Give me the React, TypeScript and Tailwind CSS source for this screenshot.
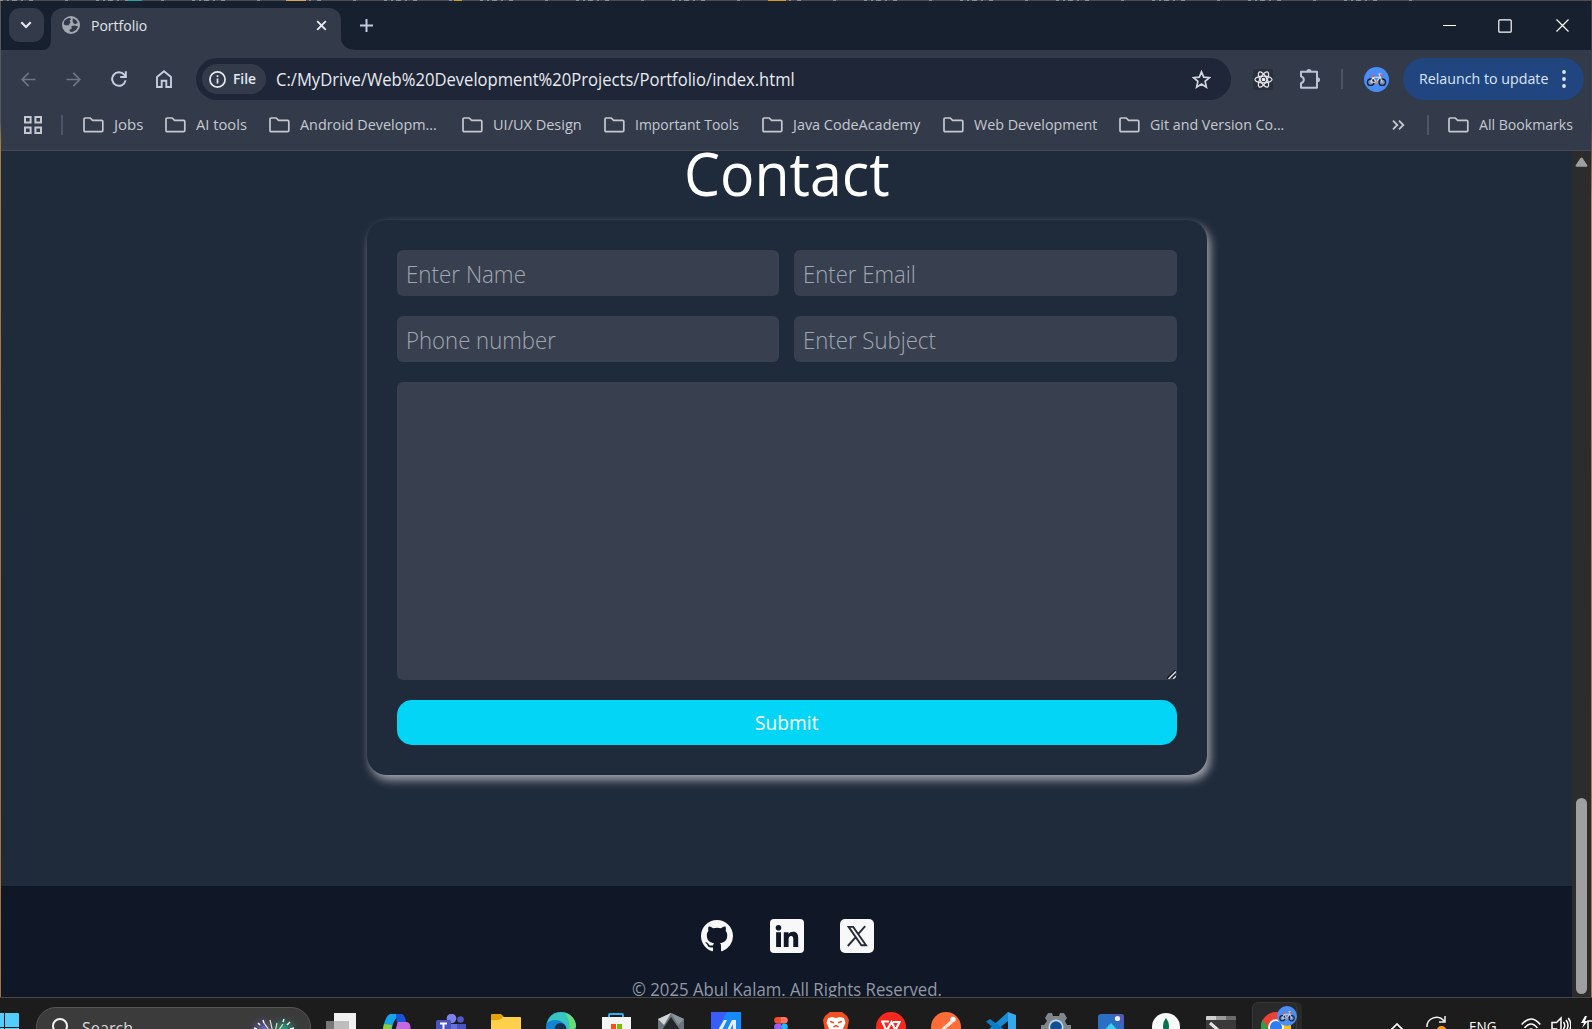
import { useLayoutEffect, useRef, useState } from 'react'
import type { ReactNode } from 'react'

/** A single line of text condensed horizontally to fill a given width. */
function Fit({ w, className = '', children }: { w: number; className?: string; children: string }) {
  const ref = useRef<HTMLSpanElement>(null)
  const [scale, setScale] = useState(1)
  useLayoutEffect(() => {
    if (ref.current) setScale(w / ref.current.offsetWidth)
  }, [w])
  return (
    <span className={`block shrink-0 ${className}`} style={{ width: w }}>
      <span ref={ref} className="inline-block origin-left whitespace-nowrap" style={{ transform: `scaleX(${scale})` }}>
        {children}
      </span>
    </span>
  )
}

function Folder() {
  return (
    <svg className="block h-[16px] w-[21px] shrink-0" viewBox="0 0 21 16" fill="none" stroke="#c6c8cf" strokeWidth="1.7">
      <path d="M1 2.2Q1 1 2.2 1H7.2L9.6 3.4H18.6Q19.8 3.4 19.8 4.6V13.4Q19.8 14.6 18.6 14.6H2.2Q1 14.6 1 13.4Z" />
    </svg>
  )
}

const bookmarks = [
  { name: 'Jobs', w: 29, next: 22 },
  { name: 'AI tools', w: 51, next: 22 },
  { name: 'Android Developm...', w: 137, next: 25 },
  { name: 'UI/UX Design', w: 89, next: 22 },
  { name: 'Important Tools', w: 104, next: 23 },
  { name: 'Java CodeAcademy', w: 127, next: 23 },
  { name: 'Web Development', w: 123, next: 22 },
  { name: 'Git and Version Co...', w: 134, next: 0 },
]

function Bike({ className }: { className: string }) {
  return (
    <svg className={className} viewBox="0 0 25 25">
      <circle cx="12.5" cy="12.5" r="12.5" fill="#4a8df6" />
      <g fill="#6f96c9" stroke="#152238" strokeWidth="1.4">
        <circle cx="6.7" cy="15.2" r="3.2" />
        <circle cx="18.3" cy="15.2" r="3.2" />
      </g>
      <path d="M6.7 15 9 10.3h6.8L12.3 15.3H6.7M9 10.3l3.3 5M15.2 7.2l3 8M14.5 7h3" fill="none" stroke="#e7dfd2" strokeWidth="1.1" />
      <path d="M7 8.7h3.6M16 7.5l2.3 1.8" stroke="#e8543c" strokeWidth="1.4" />
      <circle cx="12.4" cy="15.4" r="1.3" fill="#f08a4d" />
    </svg>
  )
}

function TabStrip() {
  return (
    <div className="flex h-[49px] bg-[#17202f] pt-[7px]">
      <div className="ml-[8px] flex h-[34px] w-[35px] items-center justify-center rounded-[11px] bg-[#333b4b] pr-[1px]">
        <svg className="h-[8px] w-[12px]" viewBox="0 0 12 8" fill="none" stroke="#e6e8ee" strokeWidth="2.1">
          <path d="M1.3 1.3 6 6l4.700-4.700" />
        </svg>
      </div>
      <svg className="mt-[30px] h-[12px] w-[7px]" viewBox="0 0 7 12">
        <path d="M0 12Q7 11 7 0V12Z" fill="#333b4b" />
      </svg>
      <div className="flex h-[42px] w-[290px] items-center rounded-t-[12px] bg-[#333b4b] pb-[8px] pl-[11px] pr-[14px]">
        <svg className="h-[18px] w-[18px]" viewBox="0 0 18 18">
          <circle cx="9" cy="9" r="9" fill="#a3a8b0" />
          <path d="M2 5.500Q4.500 1.800 8 2L9 3.500 7.500 4.600 8.600 6.200 7.500 7.700 6.800 9.300H3.200L1.700 8.200ZM10.800 2.200Q14.600 3.300 15.800 6.600L13.600 8.300 11.600 7.600 10.600 5.400ZM9.400 10.200 12 9.600 16 10.300Q15 14.500 10.200 16L8.200 15.800 7.300 14 9.700 12.600Z" fill="#333b4b" />
        </svg>
        <Fit w={56} className="ml-[11px] text-[15px] text-[#e2e4ea]">Portfolio</Fit>
        <svg className="ml-auto h-[11px] w-[11px]" viewBox="0 0 12 12" stroke="#eceef2" strokeWidth="2">
          <path d="M1.300 1.300l9.400 9.400M10.700 1.300 1.300 10.700" />
        </svg>
      </div>
      <svg className="mt-[30px] h-[12px] w-[14px]" viewBox="0 0 14 12">
        <path d="M0 0Q1 11 14 12H0Z" fill="#333b4b" />
      </svg>
      <svg className="ml-[5px] mt-[11px] h-[13px] w-[13px]" viewBox="0 0 13 13" stroke="#c3cade" strokeWidth="2">
        <path d="M6.500 0v13M0 6.500h13" />
      </svg>
      <div className="ml-auto mr-[22px] mt-[10px] flex h-[15px] items-center">
        <svg className="h-[13px] w-[13px]" viewBox="0 0 13 13" stroke="#fff"><path d="M0 6.500h13" /></svg>
        <svg className="ml-[42px] h-[14px] w-[14px]" viewBox="0 0 14 14" stroke="#fff" strokeWidth="1.2" fill="none"><rect x=".8" y=".8" width="12.400" height="12.400" rx="1" /></svg>
        <svg className="ml-[44px] h-[13px] w-[13px]" viewBox="0 0 13 13" stroke="#fff" strokeWidth="1.2"><path d="M.5.5l12 12M12.500.5l-12 12" /></svg>
      </div>
    </div>
  )
}

function Toolbar() {
  return (
    <div className="flex h-[58px] items-center">
      <svg className="ml-[20px] h-[15px] w-[15px]" viewBox="0 0 16 16" fill="none" stroke="#6e7685" strokeWidth="1.8">
        <path d="M15.500 8H1.500M8.200 1 1.300 8l6.900 7" />
      </svg>
      <svg className="ml-[30px] h-[15px] w-[15px]" viewBox="0 0 16 16" fill="none" stroke="#6e7685" strokeWidth="1.8">
        <path d="M.5 8h14M7.800 1l6.900 7-6.900 7" />
      </svg>
      <svg className="ml-[30px] h-[16px] w-[16px]" viewBox="0 0 16 16" fill="none" stroke="#c6cde0" strokeWidth="2">
        <path d="M14.600 9.400A6.800 6.800 0 1 1 13.200 3.600L14.800 5.600" />
        <path d="M14.800.3V6H9.200" />
      </svg>
      <svg className="ml-[29px] h-[18px] w-[16px]" viewBox="0 0 16 18" fill="none" stroke="#c6cde0" strokeWidth="1.9">
        <path d="M1 7 8 1.300 15 7V17H10.300V10.800H5.700V17H1Z" />
      </svg>
      <div className="ml-[24px] flex h-[42px] w-[1035px] items-center rounded-full bg-[#1e2637] pl-[6px]">
        <div className="flex h-[30px] w-[64px] items-center rounded-full bg-[#333b4b] pl-[7px]">
          <svg className="h-[17px] w-[17px]" viewBox="0 0 17 17" fill="none" stroke="#e6e8ee" strokeWidth="1.7">
            <circle cx="8.500" cy="8.500" r="7.600" />
            <path d="M8.500 7.600v5M8.500 4.300v1.800" />
          </svg>
          <Fit w={23} className="mb-[1px] ml-[7px] text-[15px] font-semibold text-[#e6e8ee]">File</Fit>
        </div>
        <Fit w={519} className="ml-[10px] text-[17.5px] text-[#e8eaf0]">C:/MyDrive/Web%20Development%20Projects/Portfolio/index.html</Fit>
        <svg className="ml-auto mr-[20px] h-[19px] w-[19px]" viewBox="0 0 19 19" fill="none" stroke="#d3d6df" strokeWidth="1.7">
          <path d="M9.500 1.800l2.200 5.300 5.800.5-4.400 3.800 1.300 5.700-4.900-3-4.900 3 1.300-5.700L1.500 7.600l5.800-.5Z" />
        </svg>
      </div>
      <div className="ml-[22px] flex h-[21px] w-[20px] items-center justify-center rounded-[2px] bg-[#2a2f3a]">
        <svg className="h-[19px] w-[19px]" viewBox="0 0 20 20" fill="none" stroke="#e3e5e9" strokeWidth="1.3">
          <ellipse cx="10" cy="10" rx="9" ry="3.500" />
          <ellipse cx="10" cy="10" rx="9" ry="3.500" transform="rotate(60 10 10)" />
          <ellipse cx="10" cy="10" rx="9" ry="3.500" transform="rotate(120 10 10)" />
          <circle cx="10" cy="10" r="1.300" fill="#fff" />
        </svg>
      </div>
      <svg className="mb-[1px] ml-[26px] h-[22px] w-[22px]" viewBox="0 0 22 22">
        <path d="M2 3.800H18V19.800H2V15.200Q4.800 14.400 4.800 11.800T2 8.400Z" fill="none" stroke="#bcc3d6" strokeWidth="2" strokeLinejoin="round" />
        <path d="M7.500 3.500A2.500 2.500 0 0 1 12.500 3.500ZM18.500 9.300A2.500 2.500 0 0 1 18.500 14.300Z" fill="#bcc3d6" />
      </svg>
      <div className="ml-[20px] h-[20px] w-[2px] bg-[#4d5668]" />
      <Bike className="ml-[21px] h-[25px] w-[25px]" />
      <div className="ml-[14px] flex h-[42px] w-[181px] items-center rounded-full bg-[#20457f] pl-[16px]">
        <Fit w={129} className="mb-[1px] text-[15px] text-[#dbe6fb]">Relaunch to update</Fit>
        <svg className="ml-[14px] h-[18px] w-[4px]" viewBox="0 0 4 18" fill="#dbe6fb">
          <circle cx="2" cy="2" r="1.900" /><circle cx="2" cy="9" r="1.900" /><circle cx="2" cy="16" r="1.900" />
        </svg>
      </div>
    </div>
  )
}

function BookmarksBar() {
  return (
    <div className="flex h-[42px] items-center pb-[8px] text-[15px] text-[#c6c8cf]">
      <svg className="ml-[23px] h-[18px] w-[18px]" viewBox="0 0 18 18" fill="none" stroke="#c6c8cf" strokeWidth="2">
        <path d="M1 1h5.600v5.600H1ZM11.400 1H17v5.600h-5.600ZM1 11.400h5.600V17H1ZM11.400 11.400H17V17h-5.600Z" />
      </svg>
      <div className="ml-[19px] mr-[20px] h-[20px] w-[2px] bg-[#4d5668]" />
      {bookmarks.map((b) => (
        <div key={b.name} className="flex items-center" style={{ marginRight: b.next }}>
          <Folder />
          <Fit w={b.w} className="mb-[2px] ml-[10px]">{b.name}</Fit>
        </div>
      ))}
      <svg className="ml-auto h-[10px] w-[13px]" viewBox="0 0 13 10" fill="none" stroke="#c6c8cf" strokeWidth="1.8">
        <path d="M1 .7 5.300 5 1 9.300M7 .7 11.300 5 7 9.300" />
      </svg>
      <div className="ml-[22px] mr-[19px] h-[20px] w-[2px] bg-[#4d5668]" />
      <Folder />
      <Fit w={94} className="mb-[2px] ml-[10px] mr-[18px]">All Bookmarks</Fit>
    </div>
  )
}

function Field({ label, w }: { label: string; w: number }) {
  return (
    <div className="flex h-[46px] items-center rounded-[6px] bg-[#384050] pl-[9px] pt-[1px]">
      <Fit w={w} className="text-[23.5px] leading-[32px] font-light text-[#a1a7b1]">{label}</Fit>
    </div>
  )
}

function Page() {
  return (
    <div className="flex h-[846px] min-w-0 flex-1 flex-col overflow-hidden">
      <main className="flex h-[735px] shrink-0 flex-col items-center bg-[#1f2a3a] pl-px">
        <h1 className="mt-[-22px] flex h-[91px] items-center pb-[3px] text-[60px] leading-[82px] text-white">
          <Fit w={206}>Contact</Fit>
        </h1>
        <form className="flex w-[840px] flex-col gap-[20px] rounded-[20px] bg-[#1f2a3a] p-[30px] shadow-[3px_5px_10px_#a4a6b0]">
          <div className="grid grid-cols-[382px_383px] gap-x-[15px] gap-y-[20px]">
            <Field label="Enter Name" w={120} />
            <Field label="Enter Email" w={113} />
            <Field label="Phone number" w={150} />
            <Field label="Enter Subject" w={133} />
          </div>
          <div className="flex h-[298px] items-end justify-end rounded-[6px] bg-[#384050] p-[1px]">
            <svg className="h-[9px] w-[9px]" viewBox="0 0 9 9">
              <path d="M0 8.500 8.500 0M4.500 8.500 8.500 4.500" stroke="#14161c" strokeWidth="1.4" />
              <path d="M1.500 9 9 1.500M6 9 9 6" stroke="#dcdde0" strokeWidth="1.4" />
            </svg>
          </div>
          <div className="flex h-[45px] items-center justify-center rounded-[15px] bg-[#03d5f7]">
            <Fit w={64} className="text-[19.5px] text-white">Submit</Fit>
          </div>
        </form>
      </main>
      <footer className="flex h-[111px] shrink-0 flex-col items-center bg-[#101726] pl-px pt-[33px]">
        <div className="flex h-[34px] items-center">
          <svg className="h-[32px] w-[32px]" viewBox="0 0 16 16" fill="#f8f8fa">
            <path d="M8 0C3.58 0 0 3.58 0 8c0 3.54 2.29 6.53 5.47 7.59.4.07.55-.17.55-.38 0-.19-.01-.82-.01-1.49-2.01.37-2.53-.49-2.69-.94-.09-.23-.48-.94-.82-1.13-.28-.15-.68-.52-.01-.53.63-.01 1.08.58 1.23.82.72 1.21 1.87.87 2.33.66.07-.52.28-.87.51-1.07-1.78-.2-3.64-.89-3.64-3.95 0-.87.31-1.59.82-2.15-.08-.2-.36-1.02.08-2.12 0 0 .67-.21 2.2.82.64-.18 1.32-.27 2-.27s1.36.09 2 .27c1.53-1.04 2.2-.82 2.2-.82.44 1.1.16 1.92.08 2.12.51.56.82 1.27.82 2.15 0 3.07-1.87 3.75-3.65 3.95.29.25.54.73.54 1.48 0 1.07-.01 1.93-.01 2.2 0 .21.15.46.55.38A8.01 8.01 0 0 0 16 8c0-4.42-3.58-8-8-8Z" />
          </svg>
          <svg className="ml-[37px] h-[34px] w-[34px]" viewBox="0 0 34 34">
            <rect width="34" height="34" rx="4" fill="#f8f8fa" />
            <circle cx="8.500" cy="8.700" r="2.800" fill="#101726" />
            <path d="M6.1 13.2h4.9V28H6.1ZM13.8 13.2h4.7v2c1-1.6 2.5-2.4 4.5-2.4 4 0 5.2 2.6 5.2 6.5V28h-4.9v-7.6c0-2-.5-3.4-2.2-3.4-1.8 0-2.5 1.3-2.5 3.4V28h-4.8Z" fill="#101726" />
          </svg>
          <svg className="ml-[36px] h-[34px] w-[34px]" viewBox="0 0 34 34">
            <rect width="34" height="34" rx="5" fill="#f8f8fa" />
            <path d="M8.600 7.900h4.600L26 26.200h-4.600ZM25.200 7.200l-7.500 8.500M15.300 18.600 7.800 27" fill="none" stroke="#252b38" strokeWidth="1.9" />
          </svg>
        </div>
        <Fit w={310} className="mt-[23px] text-[17.5px] leading-[26px] text-[#9299a5]">© 2025 Abul Kalam. All Rights Reserved.</Fit>
      </footer>
    </div>
  )
}

function ScrollBar() {
  return (
    <div className="flex w-[19px] shrink-0 flex-col items-center bg-[#2c2c2c]">
      <svg className="mt-[6px] h-[10px] w-[13px]" viewBox="0 0 13 10">
        <path d="M5.400 1.200Q6.500-.2 7.600 1.200L12.200 8Q13 9.800 11.400 9.800H1.600Q0 9.800.8 8Z" fill="#9f9f9f" />
      </svg>
      <div className="mb-[3px] mt-auto h-[196px] w-[11px] rounded-full bg-[#9f9f9f]" />
    </div>
  )
}

function Slot({ top, w, children }: { top: number; w: number; children: ReactNode }) {
  return (
    <div className="flex w-[55px] shrink-0 justify-center" style={{ paddingTop: top }}>
      <svg className="h-[30px] shrink-0" style={{ width: w }} viewBox={`0 0 ${w} 30`}>{children}</svg>
    </div>
  )
}

function Taskbar() {
  return (
    <div className="flex h-[31px] items-start overflow-hidden bg-[#1c1c1c]">
      <svg className="mt-[15px] h-[30px] w-[19px] shrink-0" viewBox="0 0 19 30" fill="#55cdfb">
        <path d="M0 0H4V14H0ZM5 0H18Q19 0 19 1V14H5ZM0 15H4V28H0ZM5 15H19V28H5Z" />
      </svg>
      <div className="ml-[17px] mt-[9px] flex h-[40px] w-[275px] shrink-0 items-start rounded-full border border-[#565656] bg-[#3b3b3b] pl-[14px]">
        <svg className="mt-[10px] h-[20px] w-[20px]" viewBox="0 0 20 20" fill="none" stroke="#f2f2f2" strokeWidth="2">
          <circle cx="9" cy="8" r="7" /><path d="M4 13l-4 5" />
        </svg>
        <Fit w={51} className="ml-[11px] mt-[8px] text-[16.5px] leading-[24px] text-[#d6d6d6]">Search</Fit>
        <svg className="ml-auto mr-[8px] mt-[7px] h-[30px] w-[56px]" viewBox="0 0 56 30">
          <defs>
            <radialGradient id="sparkBlue"><stop offset="0" stopColor="#6d6bc8" /><stop offset="1" stopColor="#3b3b3b" stopOpacity="0" /></radialGradient>
            <radialGradient id="sparkTeal"><stop offset="0" stopColor="#23a58c" /><stop offset="1" stopColor="#3b3b3b" stopOpacity="0" /></radialGradient>
          </defs>
          <ellipse cx="18" cy="14" rx="18" ry="15" fill="url(#sparkBlue)" />
          <ellipse cx="38" cy="13" rx="17" ry="14" fill="url(#sparkTeal)" />
          <path d="M28 22 24 5M28 22 18 8M28 22 31 8M28 22 37 9" stroke="#e8e0b0" strokeWidth="1.2" />
          <path d="M8 13l3 1M12 8l2 2M17 5l1 3M38 4l-1 3M44 7l-3 3M48 13l-4 1M6 19h4" stroke="#fff" strokeWidth="1.4" />
        </svg>
      </div>
      <div className="ml-[2px] flex shrink-0">
        <Slot top={15} w={30}>
          <rect x="8" width="22" height="22" fill="#f1f1f1" /><rect y="8" width="23" height="20" fill="#777" /><rect x="8" y="8" width="15" height="16" fill="#bdbdbd" />
        </Slot>
        <Slot top={16} w={30}>
          <path d="M0 26Q3 2 9 0H21Q13 3 11 14L9 26Z" fill="#12a5e8" /><path d="M1 20 3 10 11 11 9 22Z" fill="#8fcb3a" /><path d="M15 0h6q3 1 4 8l-9 4Z" fill="#1c53d8" /><path d="M17 8h9q5 1 3 12H13Z" fill="#c668e4" />
        </Slot>
        <Slot top={16} w={30}>
          <circle cx="15.500" cy="4.500" r="4.800" fill="#7b83eb" /><circle cx="24.500" cy="5.500" r="3.300" fill="#5059c9" /><rect x="10" y="10" width="20" height="18" rx="2" fill="#6870dc" /><rect x="21" y="10" width="9" height="18" fill="#4a52bd" /><rect y="6" width="15" height="18" rx="1.500" fill="#4b53bc" /><path d="M4 9.500H11M7.500 9.500V20" stroke="#fff" strokeWidth="1.900" />
        </Slot>
        <Slot top={16} w={30}>
          <path d="M0 1Q0 0 1 0H10L13 3V8H0Z" fill="#e4a20a" /><path d="M0 6Q9 7 12 3H29Q30 3 30 4V28H0Z" fill="#ffd04c" />
        </Slot>
        <Slot top={14} w={30}>
          <circle cx="15" cy="15" r="15" fill="#1384d3" /><path d="M1 11Q4 0 15 0 28 1 30 14L27 20H19V13Q13 6 4 9Z" fill="#34c5c4" /><path d="M22 2Q30 6 30 15L26 19H22Q26 11 19 1Z" fill="#67dc74" /><circle cx="14.500" cy="17" r="6" fill="#13324f" />
        </Slot>
        <Slot top={14} w={30}>
          <path d="M8 6V2.700Q8 2 9 2H21Q22 2 22 2.700V6" fill="none" stroke="#26b4ec" strokeWidth="2" /><path d="M1 5H30V27H1Z" fill="#f4f4f4" /><path d="M10 12h5v5h-5Z" fill="#f25022" /><path d="M16 12h5v5h-5Z" fill="#7fba00" />
        </Slot>
        <Slot top={15} w={26}>
          <path d="M13 0 26 6V28H0V6Z" fill="#6d747b" /><path d="M13 0 26 6 20 12Z" fill="#8d959c" /><path d="M13 0 0 6 6 12Z" fill="#d2d6da" /><path d="M13 4 22 17H4Z" fill="#23272b" />
        </Slot>
        <Slot top={14} w={30}>
          <rect width="30" height="30" fill="#1689fb" /><path d="M0 0H16L0 30Z" fill="#3a5dfa" /><path d="M6 20 13 8h3L10 20ZM15 20 21 8h4v12h-3V12l-4 8Z" fill="#e9efff" />
        </Slot>
        <Slot top={19} w={14}>
          <path d="M7 0H3.500a3.300 3.300 0 0 0 0 6.600H7Z" fill="#f24e2e" /><path d="M7 0h3.500a3.300 3.300 0 0 1 0 6.600H7Z" fill="#ff7262" /><path d="M7 6.600H3.500a3.300 3.300 0 0 0 0 6.600H7Z" fill="#a259ff" /><circle cx="10.400" cy="9.900" r="3.300" fill="#1abcfe" />
        </Slot>
        <Slot top={14} w={26}>
          <path d="M7 0H19L24 4 26 8 23 25H3L0 8 2 4Z" fill="#f2501e" /><path d="M5 6 9 5l4 1 4-1 4 1 1.500 5-4 9H7.500l-4-9Z" fill="#fff" /><path d="M7 9.500l4 1.200M19 9.500l-4 1.200M10.500 15 13 13.500l2.500 1.500" fill="none" stroke="#f2501e" strokeWidth="1.500" />
        </Slot>
        <Slot top={14} w={30}>
          <circle cx="15" cy="15" r="15" fill="#f8281f" /><path d="M5 9.500H13M6.500 10l4 9 5-9 4 8 4-8H17" fill="none" stroke="#fff" strokeWidth="2.200" />
        </Slot>
        <Slot top={14} w={30}>
          <circle cx="15" cy="15" r="15" fill="#ff6c37" /><circle cx="22" cy="7.500" r="2.700" fill="#fff" /><path d="M19.500 8.500 22 11 13 18l-3 1 1-3Z" fill="#ffe6dc" />
        </Slot>
        <Slot top={14} w={30}>
          <path d="M22 0V9L6 22 2 20V18Z" fill="#168bd6" /><path d="M0 9.500 4 7 22 20V29Z" fill="#0d7cc8" /><path d="M22 0 30 3V28L22 30Z" fill="#35a8ee" />
        </Slot>
        <Slot top={15} w={30}>
          <path d="M7 0h4l1 3h6l1-3h4l3 5-2 3 2 4h4v8H0v-8h3l3-4-2-3Z" fill="#7f868d" /><circle cx="15" cy="14" r="7.500" fill="#c9d4de" /><circle cx="15" cy="14" r="5.800" fill="#0f4f96" />
        </Slot>
        <Slot top={16} w={26}>
          <rect width="26" height="28" rx="3" fill="#2a6fc4" /><path d="M13 0H23Q26 0 26 3V14Z" fill="#4b5cb8" /><circle cx="19.500" cy="4.500" r="2.600" fill="#f0f4ff" /><path d="M13 9 23 20H3Z" fill="#3bd2f0" />
        </Slot>
        <Slot top={15} w={28}>
          <circle cx="14" cy="14" r="14" fill="#f7f8f7" /><path d="M14 5Q20 12 14 23 8 12 14 5Z" fill="#03734f" />
        </Slot>
        <Slot top={18} w={30}>
          <rect width="30" height="28" rx="1" fill="#3a3a3a" /><path d="M0 1Q0 0 1 0H10V4H0Z" fill="#cfcfcf" /><path d="M10 0H20V4H10Z" fill="#9b9b9b" /><path d="M20 0H29Q30 0 30 1V4H20Z" fill="#6b6b6b" /><path d="M4 7l8 7" stroke="#e4e4e4" strokeWidth="3" />
        </Slot>
        <div className="ml-[4px] flex w-[50px] items-start pt-[4px]">
          <div className="flex h-[40px] w-[45px] shrink-0 rounded-[6px] border border-[#383838] bg-[#2a2a2a] pl-[8px] pt-[3px] shadow-[5px_0_0_#292929]">
            <svg className="h-[30px] w-[30px] shrink-0" viewBox="0 0 30 30">
              <circle cx="15" cy="21" r="15" fill="#ea4335" />
              <path d="M1.500 13.500 9 25V36H0V21Q0 16 1.500 13.500Z" fill="#2c9f4b" />
              <path d="M15 14H30V30H15Z" fill="#fbc116" />
              <circle cx="15" cy="21" r="7.800" fill="#fff" /><circle cx="15" cy="21" r="6" fill="#2f7df0" />
            </svg>
          </div>
          <Bike className="ml-[-20px] mt-[4px] h-[20px] w-[20px] shrink-0" />
        </div>
      </div>
      <div className="ml-auto flex shrink-0 items-start">
        <svg className="mt-[25px] h-[7px] w-[14px]" viewBox="0 0 14 7" fill="none" stroke="#fff" strokeWidth="1.700"><path d="M1 7 7 1l6 6" /></svg>
        <svg className="ml-[22px] mt-[18px] h-[20px] w-[21px]" viewBox="0 0 21 20" fill="none" stroke="#f2f2f2" strokeWidth="1.500">
          <path d="M1 11A9.500 9.500 0 0 1 18 5M19 0V6H13" /><circle cx="15.500" cy="15" r="5" fill="#ff9a0d" stroke="none" />
        </svg>
        <Fit w={28} className="ml-[22px] mt-[17px] text-[14.5px] leading-[24px] text-white">ENG</Fit>
        <svg className="ml-[24px] mt-[20px] h-[20px] w-[20px]" viewBox="0 0 20 20" fill="none" stroke="#fff" strokeWidth="1.600">
          <path d="M.7 6.600Q10-4.700 19.300 6.600M3.600 10Q10 2 16.400 10M6.500 13q3.500-4 7 0" />
        </svg>
        <svg className="ml-[10px] mt-[18px] h-[20px] w-[20px]" viewBox="0 0 20 20" fill="none" stroke="#fff" strokeWidth="1.500">
          <path d="M10 2 5.500 6.500H1V13h4.500L10 17ZM12.500 6q2.500 3.500 0 7M15 4q4 5 0 11M17.300 2q5 7 0 15" />
        </svg>
        <svg className="ml-[10px] mt-[18px] h-[20px] w-[11px]" viewBox="0 0 11 20" fill="none" stroke="#fff" strokeWidth="1.500">
          <path d="M11 5H7V16H11" /><path d="M4 0 0 7H3L1 12 7 5H4L6 0Z" fill="#fff" stroke="none" />
        </svg>
      </div>
    </div>
  )
}

export default function App() {
  return (
    <div className="flex h-[1029px] w-[1592px] flex-col overflow-hidden bg-[#1c1c1c] font-['Open_Sans','Noto_Sans',sans-serif]">
      <svg className="block h-px w-full shrink-0" viewBox="0 0 1592 1" preserveAspectRatio="none">
        <rect width="1592" height="1" fill="#4a4c50" />
        <path d="M0 .5H1430" stroke="#8b8f94" strokeDasharray="3 4 2 3 5 4 2 6 4 32 3 28" />
        <path d="M128 .5h14" stroke="#27a59a" /><path d="M286 .5h20" stroke="#d8a94a" /><path d="M454 .5h8M768 .5h18" stroke="#d59a2e" />
      </svg>
      <div className="flex h-[996px] shrink-0">
        <div className="w-px shrink-0 bg-linear-to-b from-[#55595f] from-12% via-[#a07f3d] via-14% to-[#a8703f]" />
        <div className="flex w-[1590px] shrink-0 flex-col overflow-hidden rounded-t-[8px] bg-[#333b4b]">
          <TabStrip />
          <Toolbar />
          <BookmarksBar />
          <div className="h-px shrink-0 bg-[#484b51]" />
          <div className="flex">
            <Page />
            <ScrollBar />
          </div>
        </div>
        <div className="w-px shrink-0 bg-linear-to-b from-[#3c414b] from-12% via-[#b08a4c] via-20% to-[#a67a44]" />
      </div>
      <div className="h-px shrink-0 bg-[#474747]" />
      <Taskbar />
    </div>
  )
}
